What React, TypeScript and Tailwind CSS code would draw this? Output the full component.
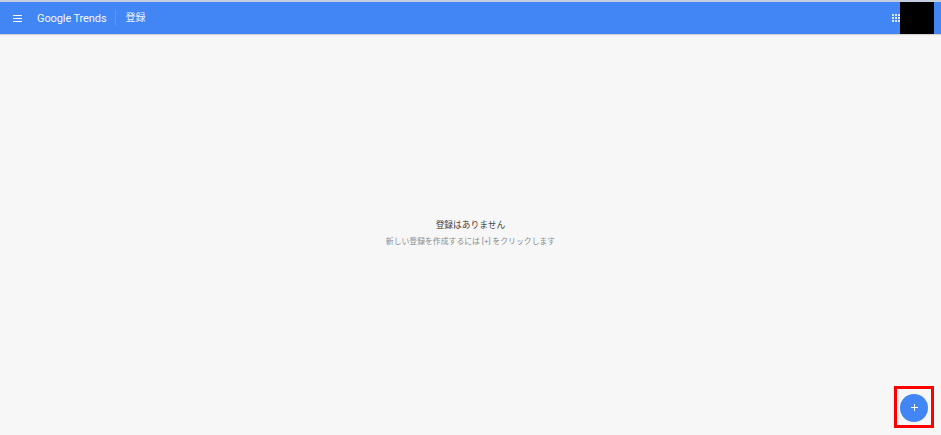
export default function App() {
  return (
    <div className="relative flex h-[435px] w-[941px] flex-col overflow-hidden bg-[#f7f7f7] font-['Roboto','Noto_Sans_CJK_JP',sans-serif]">
      <div className="h-[2px] bg-[#c4cede]" />
      <header className="flex h-[32px] items-center bg-[#4285f4] text-white shadow-[0_1px_1px_rgba(0,0,0,0.15)]">
        <svg className="ml-[13px] h-[9px] w-[9px]" viewBox="0 0 9 9" fill="#fff">
          <rect y="1" width="9" height="1" />
          <rect y="4" width="9" height="1" />
          <rect y="7" width="9" height="1" />
        </svg>
        <span className="ml-[15px] text-[11px] leading-none tracking-[-0.1px] whitespace-nowrap opacity-95">Google Trends</span>
        <div className="ml-[8px] h-[16px] w-px bg-[#5b95f5]" />
        <span className="ml-[10px] text-[10px] leading-none opacity-90">登録</span>
        <div className="ml-auto grid grid-cols-3 gap-[1px] opacity-80">
          {Array.from({ length: 9 }).map((_, i) => (
            <div key={i} className="h-[2px] w-[2px] bg-white" />
          ))}
        </div>
        <div className="mr-[7px] h-[32px] w-[34px] bg-black" />
      </header>
      <main className="flex flex-1 flex-col items-center pt-[184px]">
        <p className="text-[8.75px] leading-[14px] text-[#444]">登録はありません</p>
        <p className="mt-[4px] text-[7.85px] leading-[12px] text-[#8c8c8c]">新しい登録を作成するには [+] をクリックします</p>
      </main>
      <div className="absolute top-[386px] left-[894px] flex h-[42px] w-[40px] items-center justify-center border-[3px] border-[#ff0000] pt-[1px]">
        <div className="flex h-[28px] w-[28px] items-center justify-center rounded-full bg-[#4285f4]">
          <svg className="h-[7px] w-[7px]" viewBox="0 0 7 7" fill="#fff">
            <rect x="3" width="1" height="7" />
            <rect y="3" width="7" height="1" />
          </svg>
        </div>
      </div>
    </div>
  );
}
